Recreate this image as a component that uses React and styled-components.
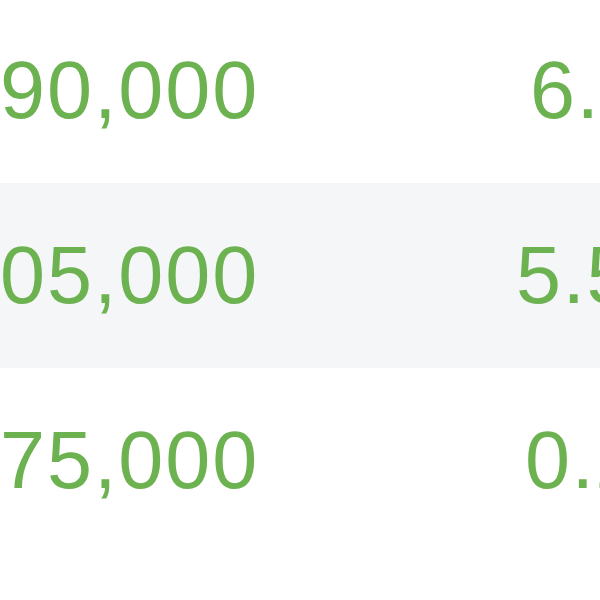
import React from "react";
import styled, { createGlobalStyle } from "styled-components";

const Global = createGlobalStyle`
  html, body { margin: 0; padding: 0; background: #ffffff; }
  body { width: 600px; height: 600px; overflow: hidden; }
`;

const Table = styled.div`
  width: 600px;
  margin-top: -2px;
  display: flex;
  flex-direction: column;
  font-family: "Liberation Sans", Arial, sans-serif;
  color: #6cb250;
`;

const Row = styled.div`
  height: 185px;
  display: grid;
  grid-template-columns: 256px 1fr;
  align-items: center;
  background: ${(p) => (p.$striped ? "#f4f6f8" : "#ffffff")};
  white-space: nowrap;
  overflow: hidden;
`;

const Amount = styled.div`
  font-size: 81px;
  letter-spacing: 1.9px;
  text-align: right;
  margin-right: -2px;
`;

const Rate = styled.div`
  font-size: 81px;
  letter-spacing: 1.5px;
  padding-left: ${(p) => p.$indent}px;
`;

const rows = [
  { amount: "90,000", rate: "6.12", indent: 274 },
  { amount: "05,000", rate: "5.55", indent: 260, striped: true },
  { amount: "75,000", rate: "0.25", indent: 269 },
];

export default function App() {
  return (
    <>
      <Global />
      <Table>
        {rows.map((r) => (
          <Row key={r.amount} $striped={r.striped}>
            <Amount>{r.amount}</Amount>
            <Rate $indent={r.indent}>{r.rate}</Rate>
          </Row>
        ))}
      </Table>
    </>
  );
}
